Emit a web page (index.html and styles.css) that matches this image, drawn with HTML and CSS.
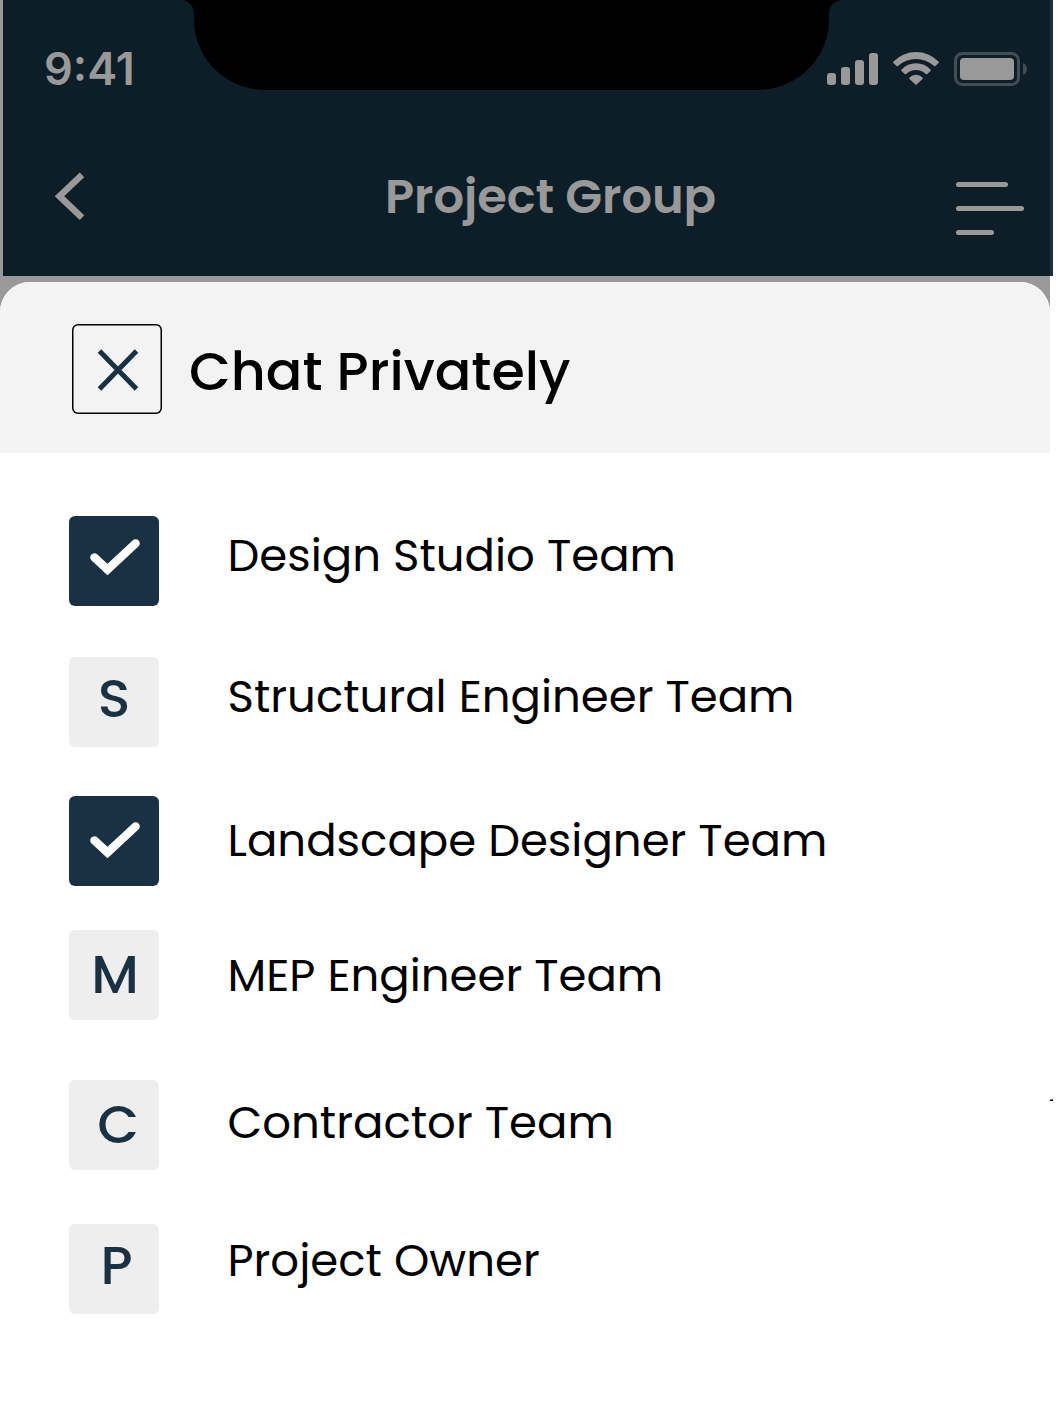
FILE: index.html
```html
<!DOCTYPE html>
<html lang="en">
<head>
    <meta charset="utf-8">
    <title>Project Group</title>
    <meta name="viewport" content="width=device-width, initial-scale=1.0">
    <link rel="stylesheet" href="styles.css">
</head>
<body>
    <div class="screen">
        <header class="top">
            <svg class="notch" width="660" height="90" viewBox="182 0 660 90">
                <path d="M182 0C189 1 194 6 194 14V19C194 59 226 90 266 90H757C797 90 829 59 829 19V14C829 6 834 1 842 0Z"/>
            </svg>
            <div class="status">
                <span class="time">9:41</span>
                <svg class="status-icons" width="202" height="36" viewBox="826 51 202 36">
                    <rect x="827" y="73" width="9" height="12" rx="3"/>
                    <rect x="841" y="67" width="9" height="18" rx="3"/>
                    <rect x="855" y="60" width="9" height="25" rx="3"/>
                    <rect x="869" y="53" width="9" height="32" rx="3"/>
                    <path d="M893.5 61.5Q903 52 916 52T938.500 61.500Q939.300 62.200 938.600 63L935.500 66Q934.700 66.700 934 66Q926 59 916 59T898 66Q897.300 66.700 896.500 66L893.400 63Q892.700 62.200 893.500 61.500Z"/>
                    <path d="M901.500 69.500Q907.500 63.300 916 63.300T930.500 69.500Q931.200 70.200 930.500 71L927.300 74Q926.600 74.700 925.900 74Q921.500 70 916 70T906.100 74Q905.400 74.700 904.700 74L901.500 71Q900.800 70.200 901.500 69.500Z"/>
                    <path d="M909.500 77.500Q912.200 74.700 916 74.700T922.500 77.500Q923.200 78.200 922.500 79L916.600 84.600Q916 85.200 915.400 84.600L909.500 79Q908.800 78.200 909.500 77.500Z"/>
                    <rect class="battery-shell" x="955.500" y="53.500" width="63" height="31" rx="7"/>
                    <rect x="960" y="58" width="54" height="22" rx="4"/>
                    <path class="battery-tip" d="M1023 63Q1027 65 1027 69T1023 75Z"/>
                </svg>
            </div>
            <div class="nav">
                <svg class="back" width="30" height="48" viewBox="55 172 30 48">
                    <path d="M82 174.800L59.500 196.200L82 217.600"/>
                </svg>
                <h1 class="title">Project Group</h1>
                <svg class="menu" width="68" height="54" viewBox="956 182 68 54">
                    <path d="M958.500 184.500H1005.500M958.500 208.500H1021.500M958.500 232.500H991.500"/>
                </svg>
            </div>
        </header>

        <main class="backdrop">
            <section class="sheet">
                <div class="sheet-head">
                    <button class="close" aria-label="Close">
                        <svg width="42" height="42" viewBox="0 0 42 42">
                            <path d="M2.500 2L39.500 40M39.500 2L2.500 40"/>
                        </svg>
                    </button>
                    <h2 class="heading">Chat Privately</h2>
                </div>
                <ul class="teams">
                    <li class="team design">
                        <span class="tile checked">
                            <svg width="50" height="36" viewBox="0 0 50 36"><path d="M4.500 18.500L17.500 30.500L45.500 4.500"/></svg>
                        </span>
                        <span class="name">Design Studio Team</span>
                    </li>
                    <li class="team structural">
                        <span class="tile">S</span>
                        <span class="name">Structural Engineer Team</span>
                    </li>
                    <li class="team landscape">
                        <span class="tile checked">
                            <svg width="50" height="36" viewBox="0 0 50 36"><path d="M4.500 18.500L17.500 30.500L45.500 4.500"/></svg>
                        </span>
                        <span class="name">Landscape Designer Team</span>
                    </li>
                    <li class="team mep">
                        <span class="tile">M</span>
                        <span class="name">MEP Engineer Team</span>
                    </li>
                    <li class="team contractor">
                        <span class="tile">C</span>
                        <span class="name">Contractor Team</span>
                    </li>
                    <li class="team owner">
                        <span class="tile">P</span>
                        <span class="name">Project Owner</span>
                    </li>
                </ul>
            </section>
            <span class="tick"></span>
        </main>
    </div>
</body>
</html>
```

FILE: styles.css
```css
* {
    box-sizing: border-box;
}
body {
    margin: 0;
    background: #fff;
    font-family: Poppins, Inter, sans-serif;
    color: #000;
}
.screen {
    width: 1053px;
    height: 1404px;
    overflow: hidden;
}
.top {
    position: relative;
    height: 276px;
    background: #0e1e28;
    border-left: 3px solid #999;
    border-right: 3px solid #1a3143;
    color: #999;
}
.notch {
    position: absolute;
    top: 0;
    left: 179px;
}
.status {
    display: flex;
    justify-content: space-between;
    align-items: flex-start;
    height: 140px;
    padding: 41px 22px 0 41px;
}
.time {
    font-family: Inter, sans-serif;
    font-size: 45px;
    font-weight: 600;
    line-height: 55px;
}
.status-icons {
    margin-top: 10px;
    fill: #999;
}
.battery-shell {
    fill: none;
    stroke: #434d54;
    stroke-width: 3;
}
.battery-tip {
    fill: #434d54;
}
.nav {
    display: flex;
    justify-content: space-between;
    align-items: flex-start;
    padding: 27px 26px 0 52px;
}
.back {
    margin-top: 5px;
    fill: none;
    stroke: #999;
    stroke-width: 6.500;
}
.title {
    margin: 1px 0 0 60px;
    font-size: 48px;
    font-weight: 600;
    line-height: 58px;
    letter-spacing: -0.1px;
}
.menu {
    margin-top: 15px;
    fill: none;
    stroke: #999;
    stroke-width: 5;
    stroke-linecap: round;
}
.backdrop {
    position: relative;
    width: 1050px;
    padding-top: 6px;
    background: #999;
}
.sheet {
    height: 1122px;
    background: #fff;
    border-radius: 30px 30px 0 0;
    overflow: hidden;
}
.sheet-head {
    display: flex;
    gap: 27px;
    height: 171px;
    padding: 42px 0 0 72px;
    background: #f3f3f3;
}
.close {
    display: flex;
    align-items: center;
    justify-content: center;
    width: 90px;
    height: 90px;
    padding: 2px 0 0 2px;
    background: none;
    border: none;
    border-radius: 6px;
    box-shadow: inset 0 0 0 1.500px #000;
}
.close svg {
    fill: none;
    stroke: #1a3143;
    stroke-width: 5;
}
.heading {
    margin: 15px 0 0;
    font-size: 54px;
    font-weight: 500;
    line-height: 64px;
}
.teams {
    margin: 0;
    padding: 63px 0 0 69px;
    list-style: none;
}
.team {
    display: flex;
    gap: 68.5px;
    height: 90px;
}
.tile {
    width: 90px;
    height: 90px;
    padding-top: 9px;
    border-radius: 6px;
    background: #eee;
    color: #1a3143;
    font-size: 54px;
    font-weight: 500;
    line-height: 64px;
    text-align: center;
}
.checked {
    padding: 23px 0 0 2px;
    background: #1a3143;
    line-height: 0;
}
.checked svg {
    fill: none;
    stroke: #fff;
    stroke-width: 8.500;
    stroke-linecap: round;
}
.name {
    padding-top: 10px;
    font-size: 45px;
    line-height: 60px;
    white-space: nowrap;
}
.structural {
    margin-top: 51px;
}
.landscape {
    margin-top: 49px;
}
.landscape .checked {
    padding-top: 26px;
}
.landscape .name {
    padding-top: 15px;
}
.mep {
    margin-top: 44px;
}
.mep .tile {
    padding: 12px 0 0 2px;
}
.mep .name {
    padding-top: 16px;
}
.contractor {
    margin-top: 60px;
}
.contractor .tile {
    padding: 12px 0 0 8px;
}
.contractor .name {
    padding-top: 13px;
}
.owner {
    margin-top: 54px;
}
.owner .tile {
    padding: 9px 0 0 5px;
}
.owner .name {
    padding-top: 7px;
}
/* end of the divider that shows past the sheet */
.tick {
    position: absolute;
    top: 823px;
    left: 1050px;
    width: 3px;
    height: 2px;
    background: linear-gradient(#777 50%, #000 50%);
}
```
